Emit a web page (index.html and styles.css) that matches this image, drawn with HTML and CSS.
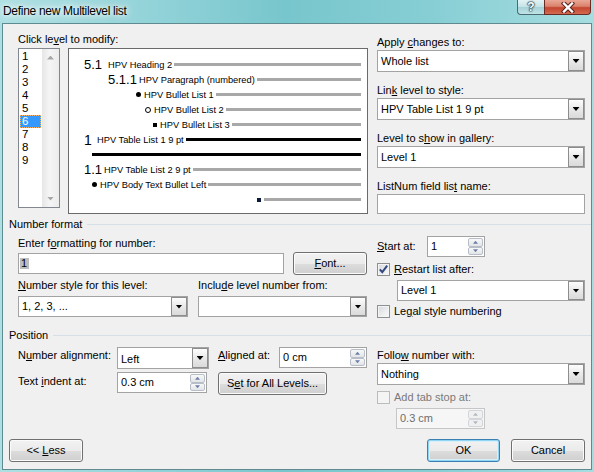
FILE: index.html
```html
<!DOCTYPE html>
<html>
<head>
<meta charset="utf-8">
<title>Define new Multilevel list</title>
<link rel="stylesheet" href="styles.css">
</head>
<body>
<div class="window">
  <div class="titlebar">
    <span class="title">Define new Multilevel list</span>
    <div class="capbtns">
      <div class="cap help">?</div>
      <div class="cap close">
        <svg width="14" height="11" viewBox="0 0 14 11"><path d="M3 1.5 L11 9.5 M11 1.5 L3 9.5" stroke="#5a231b" stroke-width="4.4" stroke-linecap="square" fill="none"/><path d="M3 1.5 L11 9.5 M11 1.5 L3 9.5" stroke="#ffffff" stroke-width="2.4" stroke-linecap="square" fill="none"/></svg>
      </div>
    </div>
  </div>
  <div class="client">
    <div class="top">
      <div class="levels-col">
        <div class="lbl">Click le<u>v</u>el to modify:</div>
        <div class="levels-row">
          <div class="levellist">
            <div class="items">
              <div class="item">1</div>
              <div class="item">2</div>
              <div class="item">3</div>
              <div class="item">4</div>
              <div class="item">5</div>
              <div class="item sel">6</div>
              <div class="item">7</div>
              <div class="item">8</div>
              <div class="item">9</div>
            </div>
            <div class="vscroll">
              <div class="sb-btn sb-up"></div>
              <div class="sb-btn sb-down"></div>
            </div>
          </div>
          <div class="preview">
            <div class="prow r1"><span class="num">5.1</span><span class="ptxt">HPV Heading 2</span><span class="pline"></span></div>
            <div class="prow r2"><span class="num">5.1.1</span><span class="ptxt">HPV Paragraph (numbered)</span><span class="pline"></span></div>
            <div class="prow r3"><span class="dot"></span><span class="ptxt">HPV Bullet List 1</span><span class="pline"></span></div>
            <div class="prow r4"><span class="ring"></span><span class="ptxt">HPV Bullet List 2</span><span class="pline"></span></div>
            <div class="prow r5"><span class="sq"></span><span class="ptxt">HPV Bullet List 3</span><span class="pline"></span></div>
            <div class="prow r6"><span class="num">1</span><span class="ptxt">HPV Table List 1 9 pt</span><span class="pline dark"></span></div>
            <div class="prow r7"><span class="pline dark"></span></div>
            <div class="prow r8"><span class="num">1.1</span><span class="ptxt">HPV Table List 2 9 pt</span><span class="pline"></span></div>
            <div class="prow r9"><span class="dot"></span><span class="ptxt">HPV Body Text Bullet Left</span><span class="pline"></span></div>
            <div class="prow r10"><span class="sqs"></span><span class="pline"></span></div>
          </div>
        </div>
      </div>
      <div class="side-col">
        <div class="field">
          <div class="lbl">Apply <u>c</u>hanges to:</div>
          <div class="combo"><span class="val">Whole list</span><span class="drop"></span></div>
        </div>
        <div class="field">
          <div class="lbl">Lin<u>k</u> level to style:</div>
          <div class="combo"><span class="val">HPV Table List 1 9 pt</span><span class="drop"></span></div>
        </div>
        <div class="field">
          <div class="lbl">Level to s<u>h</u>ow in gallery:</div>
          <div class="combo"><span class="val">Level 1</span><span class="drop"></span></div>
        </div>
        <div class="field last">
          <div class="lbl">ListNum field lis<u>t</u> name:</div>
          <div class="tb name"></div>
        </div>
      </div>
    </div>

    <div class="ghdr gh-nf"><span>Number format</span><span class="hl"></span></div>
    <div class="nf">
      <div class="nf-left">
        <div class="lbl">Enter f<u>o</u>rmatting for number:</div>
        <div class="nf-row">
          <div class="tb fmt"><span class="selgray">1</span></div>
          <div class="btn font"><u>F</u>ont...</div>
        </div>
        <div class="nf-cols">
          <div class="col1">
            <div class="lbl"><u>N</u>umber style for this level:</div>
            <div class="combo"><span class="val">1, 2, 3, ...</span><span class="drop"></span></div>
          </div>
          <div class="col2">
            <div class="lbl">Inclu<u>d</u>e level number from:</div>
            <div class="combo"><span class="val"></span><span class="drop"></span></div>
          </div>
        </div>
      </div>
      <div class="nf-right">
        <div class="startrow">
          <span class="lbl start-lbl"><u>S</u>tart at:</span>
          <div class="spin s-start"><span class="val">1</span><span class="spinbtns"><span class="up"></span><span class="down"></span></span></div>
        </div>
        <div class="chkrow restart">
          <span class="chk checked"><svg width="11" height="11" viewBox="0 0 11 11"><path d="M1.8 5.3 L4.3 8.2 L9.2 1.6" stroke="#34497f" stroke-width="2" fill="none"/></svg></span>
          <span class="lbl"><u>R</u>estart list after:</span>
        </div>
        <div class="combo restart-combo"><span class="val">Level 1</span><span class="drop"></span></div>
        <div class="chkrow legal">
          <span class="chk"></span>
          <span class="lbl">Le<u>g</u>al style numbering</span>
        </div>
      </div>
    </div>

    <div class="ghdr gh-pos"><span>Position</span><span class="hl"></span></div>
    <div class="pos">
      <div class="pos-left">
        <span class="lbl pl-a">N<u>u</u>mber alignment:</span>
        <div class="combo c-left"><span class="val">Left</span><span class="drop"></span></div>
        <span class="lbl pl-b"><u>A</u>ligned at:</span>
        <div class="spin s-aligned"><span class="val">0 cm</span><span class="spinbtns"><span class="up"></span><span class="down"></span></span></div>
        <span class="lbl pl-c">Text <u>i</u>ndent at:</span>
        <div class="spin s-indent"><span class="val">0.3 cm</span><span class="spinbtns"><span class="up"></span><span class="down"></span></span></div>
        <div class="btn setall">S<u>e</u>t for All Levels...</div>
      </div>
      <div class="pos-right">
        <div class="lbl">Follo<u>w</u> number with:</div>
        <div class="combo follow"><span class="val">Nothing</span><span class="drop"></span></div>
        <div class="chkrow tabstop">
          <span class="chk dis"></span>
          <span class="lbl dis-txt">Add tab stop at:</span>
        </div>
        <div class="spin s-tab dis"><span class="val">0.3 cm</span><span class="spinbtns"><span class="up"></span><span class="down"></span></span></div>
      </div>
    </div>

    <div class="footer">
      <div class="btn less">&lt;&lt; <u>L</u>ess</div>
      <div class="btn ok">OK</div>
      <div class="btn cancel">Cancel</div>
    </div>
  </div>
</div>
</body>
</html>
```
FILE: styles.css
```css
* { box-sizing: border-box; }
html, body { margin: 0; padding: 0; }
body {
  width: 594px;
  height: 472px;
  overflow: hidden;
  font-family: "Liberation Sans", Arial, sans-serif;
  font-size: 11px;
  color: #000;
}
u { text-decoration: underline; text-underline-offset: 1px; }

.window {
  width: 594px;
  height: 472px;
  display: flex;
  flex-direction: column;
  background: linear-gradient(to right, #aee0e3 0%, #96d5da 22%, #78c6cd 48%, #86ced4 72%, #a6dde0 100%);
}

/* title bar */
.titlebar {
  height: 23px;
  display: flex;
  align-items: flex-start;
  padding: 0 3px 0 3px;
}
.title {
  line-height: 22px;
  font-size: 12px;
  letter-spacing: -0.3px;
  text-shadow: 0 0 4px #fff, 0 0 8px rgba(255,255,255,0.9), 0 0 12px rgba(255,255,255,0.7);
}
.capbtns { margin-left: auto; display: flex; height: 15px; }
.cap {
  height: 15px;
  display: flex;
  align-items: center;
  justify-content: center;
  border: 1px solid #4c6a72;
  border-top: none;
}
.help {
  width: 27px;
  border-right: none;
  border-radius: 0 0 0 4px;
  background: linear-gradient(#e3f3f5 0%, #c4e3e6 50%, #a6d3d8 52%, #bfe3e6 100%);
  color: #fff;
  font-weight: bold;
  font-size: 12px;
  text-shadow: 0 0 1px #2c3e44, 0 0 1px #2c3e44, 0 0 2px #2c3e44, 0 0 2px #2c3e44;
}
.close {
  width: 47px;
  border-color: #6a2b24;
  border-radius: 0 0 4px 0;
  background: linear-gradient(#eaa897 0%, #d9826c 45%, #c4452f 55%, #d26a50 100%);
}

/* client area */
.client {
  margin: 0 2px;
  height: 447px;
  border: 1px solid #5f8a90;
  background: #f0f0f0;
}
.lbl { line-height: 13px; height: 13px; white-space: nowrap; }

/* top section */
.top { display: flex; gap: 9px; padding: 9px 0 0 15px; }
.levels-col { width: 350px; }
.levels-col > .lbl { margin-bottom: 2px; }
.levels-row { display: flex; gap: 8px; align-items: flex-start; }

.levellist {
  width: 42px;
  height: 160px;
  border: 1px solid #828790;
  background: #fff;
  display: flex;
}
.items { width: 23px; padding: 1px; }
.item { height: 13px; line-height: 13px; padding-left: 2px; font-size: 11.5px; }
.item.sel {
  background: #3399ff;
  color: #fff;
  outline: 1px dotted #f7b267;
  outline-offset: -1px;
}
.vscroll {
  width: 17px;
  display: flex;
  flex-direction: column;
  justify-content: space-between;
  background: linear-gradient(to right, #e6e6e6, #f5f5f5 45%, #ececec);
}
.sb-btn { height: 17px; display: flex; align-items: center; justify-content: center; }
.sb-btn::after { content: ""; width: 7px; height: 4px; background: #a7a7a7; }
.sb-up::after { clip-path: polygon(50% 0, 100% 100%, 0 100%); }
.sb-down::after { clip-path: polygon(0 0, 100% 0, 50% 100%); }

.preview {
  width: 300px;
  height: 166px;
  border: 1px solid #6a6a6a;
  background: #fff;
  padding: 8px 6px 0 0;
}
.prow { height: 15px; display: flex; align-items: center; white-space: nowrap; }
.num { font-size: 13px; flex: none; }
.ptxt { font-size: 9.3px; flex: none; }
.pline { flex: 1; height: 3px; background: #a8a8a8; margin-left: 2px; }
.pline.dark { background: #000; }
.r1, .r6, .r8 { padding-left: 15px; }
.r1 .num { width: 24px; }
.r2 { padding-left: 39px; }
.r2 .num { width: 31px; }
.r3 { padding-left: 67px; }
.r4 { padding-left: 76px; }
.r5 { padding-left: 84px; }
.r6 .num { width: 13px; font-size: 14px; }
.r6 .pline { margin-left: 2px; }
.r7 { padding-left: 23px; }
.r7 .pline { margin-left: 0; }
.r8 .num { width: 20px; }
.r9 { padding-left: 23px; }
.r10 { padding-left: 188px; }
.dot { width: 5px; height: 5px; border-radius: 50%; background: #000; margin-right: 3px; flex: none; }
.ring { width: 6px; height: 6px; border-radius: 50%; border: 1px solid #000; margin-right: 3px; flex: none; }
.sq { width: 4px; height: 4px; background: #000; margin-right: 3px; flex: none; }
.sqs { width: 4px; height: 4px; background: #0b1a3a; margin-right: 3px; flex: none; }
.r10 .pline { margin-left: 0; }

.side-col { width: 208px; padding-top: 3px; }
.field { margin-bottom: 12px; }
.field.last { margin-bottom: 0; }
.field .lbl { margin-bottom: 1px; }

/* controls */
.combo {
  height: 22px;
  border: 1px solid #a3a3a3;
  background: #fff;
  display: flex;
}
.combo .val {
  flex: 1;
  padding-left: 3px;
  line-height: 20px;
  white-space: nowrap;
  overflow: hidden;
}
.drop {
  width: 16px;
  border: 1px solid #8d8d8d;
  background: linear-gradient(#fdfdfd, #e9e9e9 50%, #dadada);
  display: flex;
  align-items: center;
  justify-content: center;
}
.drop::after {
  content: "";
  width: 7px;
  height: 4px;
  background: #000;
  clip-path: polygon(0 0, 100% 0, 50% 100%);
}
.tb {
  border: 1px solid #a3a3a3;
  background: #fff;
}
.tb.name { height: 20px; }

.spin {
  display: flex;
  height: 21px;
  border: 1px solid #a3a3a3;
  background: #fff;
}
.spin .val { flex: 1; padding-left: 3px; line-height: 19px; white-space: nowrap; }
.spinbtns { width: 15px; display: flex; flex-direction: column; margin: 1px 1px 1px 0; }
.spinbtns span {
  flex: 1;
  border: 1px solid #b8bec8;
  border-radius: 2px;
  background: linear-gradient(#f8f8f8, #e2e4e8);
  display: flex;
  align-items: center;
  justify-content: center;
}
.spinbtns span::after { content: ""; width: 5px; height: 3px; background: #6a7fa6; }
.spinbtns .up::after { clip-path: polygon(50% 0, 100% 100%, 0 100%); }
.spinbtns .down::after { clip-path: polygon(0 0, 100% 0, 50% 100%); }

.btn {
  height: 23px;
  border: 1px solid #707070;
  border-radius: 3px;
  background: linear-gradient(#f2f2f2 0%, #ebebeb 50%, #dddddd 51%, #cfcfcf 100%);
  box-shadow: inset 0 0 0 1px #fbfbfb;
  text-align: center;
  line-height: 21px;
  white-space: nowrap;
}
.btn.ok {
  border-color: #3c7fb1;
  box-shadow: inset 0 0 0 1px #8fd6f5, inset 0 0 0 2px #d8effa;
}

.chkrow { display: flex; align-items: center; gap: 4px; height: 13px; }
.chk {
  width: 13px;
  height: 13px;
  flex: none;
  border: 1px solid #8e8f8f;
  background: linear-gradient(135deg, #d6d9dd, #fbfbfb);
  box-shadow: inset 0 0 0 1px #f4f4f4;
  display: flex;
  align-items: center;
  justify-content: center;
}
.chk.dis { border-color: #bcbcbc; background: #f4f4f4; box-shadow: none; }
.dis-txt { color: #7a7a7a; }

/* group headers */
.ghdr {
  display: flex;
  align-items: center;
  gap: 5px;
  height: 13px;
  line-height: 13px;
  padding-left: 6px;
  white-space: nowrap;
}
.ghdr .hl { flex: 1; height: 1px; background: #d5dfe5; }
.gh-nf { margin-top: 4px; }
.gh-pos { margin-top: 11px; }

/* number format */
.nf { display: flex; gap: 10px; padding-left: 15px; }
.nf-left { width: 349px; padding-top: 6px; }
.nf-row { display: flex; align-items: center; height: 23px; margin-top: 2px; }
.tb.fmt { width: 266px; height: 21px; padding: 3px 0 0 1px; }
.selgray { display: inline-block; background: #bdbdbd; line-height: 11px; padding: 0 2px 0 1px; }
.btn.font { width: 74px; margin-left: 9px; }
.nf-cols { display: flex; gap: 10px; margin-top: 4px; }
.col1 { width: 170px; }
.col2 { width: 169px; }
.nf-cols .combo { margin-top: 4px; height: 21px; }
.nf-cols .combo .val { line-height: 19px; }

.nf-right { width: 208px; padding-top: 5px; }
.startrow { display: flex; align-items: center; height: 21px; }
.start-lbl { width: 50px; }
.s-start { width: 58px; }
.chkrow.restart { margin-top: 6px; }
.restart-combo { margin: 4px 0 0 20px; height: 21px; }
.restart-combo .val { line-height: 19px; }
.chkrow.legal { margin-top: 4px; }

/* position */
.pos { display: flex; gap: 10px; padding-left: 15px; }
.pos-left {
  width: 349px;
  padding-top: 5px;
  display: grid;
  grid-template-columns: 99px 92px 9px 61px 88px;
  grid-template-rows: 22px 23px;
  row-gap: 3px;
  align-items: start;
}
.pl-a { grid-column: 1; grid-row: 1; margin-top: 2px; }
.c-left { grid-column: 2; grid-row: 1; }
.c-left .val { line-height: 22px; }
.pl-b { grid-column: 4; grid-row: 1; margin-top: 2px; }
.s-aligned { grid-column: 5; grid-row: 1; }
.pl-c { grid-column: 1; grid-row: 2; margin-top: 3px; }
.s-indent { grid-column: 2; grid-row: 2; width: 90px; }
.setall { grid-column: 4 / 6; grid-row: 2; width: 109px; }

.pos-right { width: 208px; padding-top: 7px; }
.combo.follow { margin-top: 1px; }
.chkrow.tabstop { margin-top: 6px; }
.s-tab { margin: 4px 0 0 19px; width: 89px; }
.spin.dis { border-color: #c6c6c6; background: #f6f6f6; color: #6d6d6d; }
.spin.dis .spinbtns span { border-color: #d3d6da; background: #f0f0f0; }
.spin.dis .spinbtns span::after { background: #b3b9c4; }

/* footer */
.footer { display: flex; margin-top: 10px; padding: 0 6px; }
.btn.less { width: 74px; margin-right: auto; }
.btn.ok { width: 73px; }
.btn.cancel { width: 74px; margin-left: 11px; }
```
